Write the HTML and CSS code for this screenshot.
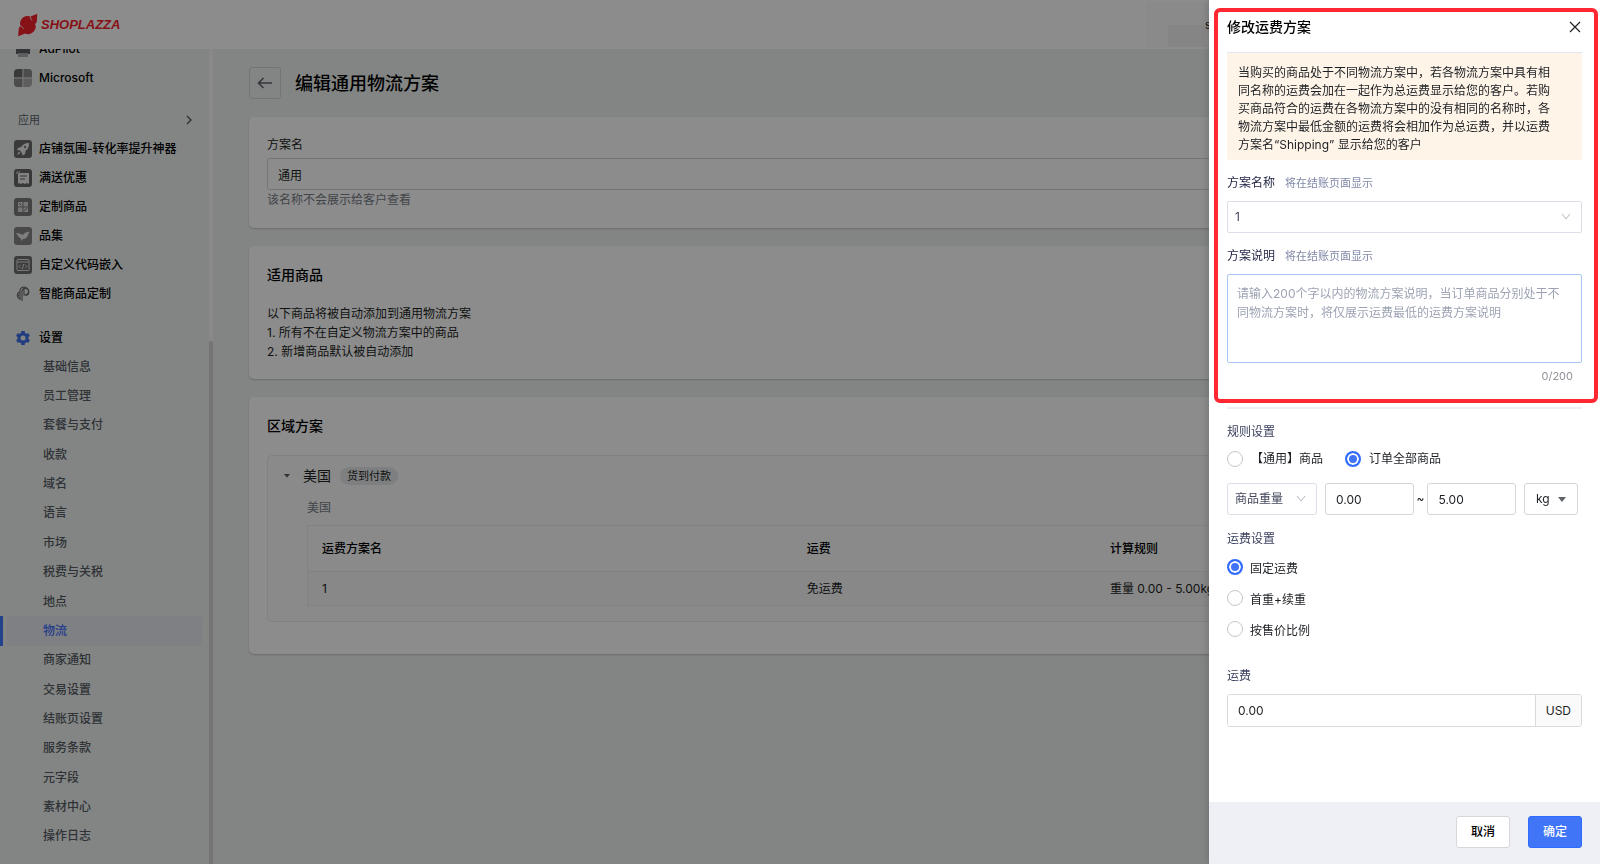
FILE: index.html
```html
<!DOCTYPE html>
<html lang="zh-CN">
<head>
    <meta charset="UTF-8">
    <meta name="viewport" content="width=device-width, initial-scale=1.0">
    <title>编辑通用物流方案</title>
    <link rel="stylesheet" href="styles.css">
</head>
<body>

    <header class="topbar">
        <a class="logo" href="#">
            <svg width="20" height="24" viewBox="0 0 20 24" aria-hidden="true">
                <path fill="#f5222d" d="M19.300 0.800 L18.800 8.600 C18.600 9.800 18 10.500 16.800 10.900 C18.200 12.600 18 14.600 17 16.600 C15.800 19 13.800 20.900 11 21.200 C9.300 21.300 8.200 20.900 7.200 20.600 L0.100 23.200 L0.800 15.700 C1 14.400 1.800 13.700 2.900 13.300 C1.800 11.500 1.700 9.500 2.900 7.300 C4.200 4.800 6.100 3.300 8.600 3 C10.200 2.800 11.500 3.100 12.500 3.500 Z"/>
                <path fill="none" stroke="#fff" stroke-width="0.900" d="M12.300 3.500 C12.600 5.500 13.200 6.500 14 7.500 M2.900 13.300 C4.400 14 5.200 15 5.800 16.200"/>
            </svg>
            <span class="logo-text">SHOPLAZZA</span>
        </a>
        <div class="account"><span class="avatar"></span><span class="account-name">sl</span></div>
    </header>

    <div class="layout">
        <aside class="sidebar">
            <nav class="menu">
                <a class="menu-item" href="#">
                    <svg class="icon" viewBox="0 0 18 18"><path fill="#5c6066" d="M2 8h14v6H2z"/><path fill="#a9acb0" d="M4 13h10v4H4z"/></svg>
                    AdPilot
                </a>
                <a class="menu-item" href="#">
                    <svg class="icon" viewBox="0 0 18 18"><rect width="18" height="18" rx="4" fill="#ababab"/><path fill="#686868" d="M4 0h4.500v8.500H0V4a4 4 0 0 1 4-4z"/><path fill="#8b8b8b" d="M9 0h5a4 4 0 0 1 4 4v4.500H9zM0 9h8.500v9H4a4 4 0 0 1-4-4z"/><path stroke="#ddd" stroke-width="1" d="M9 0v18M0 9h18"/></svg>
                    Microsoft
                </a>

                <a class="menu-group" href="#">应用
                    <svg width="10" height="10" viewBox="0 0 10 10"><path d="M3 1l4 4-4 4" fill="none" stroke="#454b55" stroke-width="1.200"/></svg>
                </a>
                <a class="menu-item" href="#">
                    <svg class="icon" viewBox="0 0 18 18"><rect width="18" height="18" rx="3" fill="#6b6b6b"/><path fill="#eee" d="M15 3c-4 0-6 1.500-8 4L4 8l-1 2 3 .500L8 13l.500 2.500L11 14l.500-3C14 9 15 7 15 3zM5 11.500L3 15l3.500-2z"/><circle cx="11" cy="7" r="1.200" fill="#777"/></svg>
                    店铺氛围-转化率提升神器
                </a>
                <a class="menu-item" href="#">
                    <svg class="icon" viewBox="0 0 18 18"><rect width="18" height="18" rx="3" fill="#666"/><path fill="#eee" d="M4 4h11v11l-2-1-2 1-2-1-2 1-2-1-1 1z"/><path stroke="#666" stroke-width="1.200" d="M6 7h7M6 10h5"/><path stroke="#eee" d="M3 5V3h3"/></svg>
                    满送优惠
                </a>
                <a class="menu-item" href="#">
                    <svg class="icon" viewBox="0 0 18 18"><rect width="18" height="18" rx="3" fill="#7b7b7b"/><path fill="#d8d8d8" d="M4 4h4.500v4.500H4zM9.500 4H14v4.500H9.500zM4 9.500h4.500V14H4zM9.500 9.500H14V14H9.500z"/><path stroke="#7b7b7b" d="M5 5l2.500 2.500M10 13l3-3"/></svg>
                    定制商品
                </a>
                <a class="menu-item" href="#">
                    <svg class="icon" viewBox="0 0 18 18"><rect width="18" height="18" rx="3" fill="#858585"/><path fill="#e6e6e6" d="M2 6c3 0 5 1 7 2 1-2 3-3 5-3l2-.500-1.500 2C14 10 12 12 9 12l-2 2 0-2.500C5 11 4 9 2 6z"/></svg>
                    品集
                </a>
                <a class="menu-item" href="#">
                    <svg class="icon" viewBox="0 0 18 18"><rect width="18" height="18" rx="3" fill="#6d6d6d"/><g fill="none" stroke="#e2e2e2"><rect x="3" y="3.500" width="12" height="11" rx="1"/><path d="M3 6h12M7 8.500L5 10.500l2 2M11 8.500l2 2-2 2M9.800 8l-1.500 5"/></g></svg>
                    自定义代码嵌入
                </a>
                <a class="menu-item" href="#">
                    <svg class="icon" viewBox="0 0 18 18"><g fill="none" stroke="#6d6d6d" stroke-width="1.200"><path d="M8 16V6a3.500 3.500 0 1 1 3.500 4.500M6 15V6C6 0 15 1.500 14.500 6.500 14 10 10 10 10 10V4.500"/><path d="M6 7C2 8 3 14 6 13.500M4.500 9.500v2"/></g></svg>
                    智能商品定制
                </a>

                <a class="menu-item menu-settings" href="#">
                    <svg class="icon" viewBox="0 0 18 18"><g fill="#3f6fe8"><circle cx="9" cy="9" r="5.500"/><path d="M7.200 2h3.600v14H7.200z"/><path d="M7.200 2h3.600v14H7.200z" transform="rotate(60 9 9)"/><path d="M7.200 2h3.600v14H7.200z" transform="rotate(120 9 9)"/></g><circle cx="9" cy="9" r="2.500" fill="#eff3f1"/></svg>
                    设置
                </a>
                <ul class="submenu">
                    <li><a href="#">基础信息</a></li>
                    <li><a href="#">员工管理</a></li>
                    <li><a href="#">套餐与支付</a></li>
                    <li><a href="#">收款</a></li>
                    <li><a href="#">域名</a></li>
                    <li><a href="#">语言</a></li>
                    <li><a href="#">市场</a></li>
                    <li><a href="#">税费与关税</a></li>
                    <li><a href="#">地点</a></li>
                    <li class="active"><a href="#">物流</a></li>
                    <li><a href="#">商家通知</a></li>
                    <li><a href="#">交易设置</a></li>
                    <li><a href="#">结账页设置</a></li>
                    <li><a href="#">服务条款</a></li>
                    <li><a href="#">元字段</a></li>
                    <li><a href="#">素材中心</a></li>
                    <li><a href="#">操作日志</a></li>
                </ul>
            </nav>
            <div class="scroll-track"><div class="scroll-thumb"></div></div>
        </aside>

        <main class="content">
            <div class="page-title">
                <button class="back" type="button" aria-label="返回">
                    <svg width="16" height="12" viewBox="0 0 16 12"><path d="M15 6H2M6.500 1L1.500 6l5 5" fill="none" stroke="#5f6670" stroke-width="1.600"/></svg>
                </button>
                <h1>编辑通用物流方案</h1>
            </div>

            <section class="card">
                <label class="field-label" for="planName">方案名</label>
                <input class="text-input" type="text" id="planName" value="通用">
                <p class="field-help">该名称不会展示给客户查看</p>
            </section>

            <section class="card">
                <h2>适用商品</h2>
                <p class="desc">以下商品将被自动添加到通用物流方案</p>
                <p class="desc">1. 所有不在自定义物流方案中的商品</p>
                <p class="desc">2. 新增商品默认被自动添加</p>
            </section>

            <section class="card card-zones">
                <h2>区域方案</h2>
                <div class="zone">
                    <div class="zone-head">
                        <svg width="6" height="4" viewBox="0 0 6 4"><path d="M0 0h6L3 3.500z" fill="#555b66"/></svg>
                        <span class="zone-name">美国</span>
                        <span class="badge">货到付款</span>
                    </div>
                    <div class="zone-body">
                        <p class="zone-country">美国</p>
                        <table class="rates">
                            <thead>
                                <tr><th class="col-name">运费方案名</th><th class="col-fee">运费</th><th>计算规则</th></tr>
                            </thead>
                            <tbody>
                                <tr><td>1</td><td>免运费</td><td>重量 0.00 - 5.00kg</td></tr>
                            </tbody>
                        </table>
                    </div>
                </div>
            </section>
        </main>
    </div>

    <div class="mask"></div>

    <form class="drawer">
        <div class="drawer-head">
            <h2>修改运费方案</h2>
            <button class="close" type="button" aria-label="关闭">
                <svg width="12" height="12" viewBox="0 0 12 12"><path d="M1 1l10 10M11 1L1 11" stroke="#222" stroke-width="1.200"/></svg>
            </button>
        </div>

        <div class="drawer-body">
            <p class="notice">当购买的商品处于不同物流方案中，若各物流方案中具有相同名称的运费会加在一起作为总运费显示给您的客户。若购买商品符合的运费在各物流方案中的没有相同的名称时，各物流方案中最低金额的运费将会相加作为总运费，并以运费方案名“Shipping” 显示给您的客户</p>

            <div class="form-label">
                <label for="rateName">方案名称</label><span>将在结账页面显示</span>
            </div>
            <div class="select-box">
                <select id="rateName"><option>1</option></select>
                <svg class="chevron" viewBox="0 0 10 8"><path d="M1 1l4 5 4-5" fill="none" stroke="#b4b8c2"/></svg>
            </div>

            <div class="form-label">
                <label for="rateDesc">方案说明</label><span>将在结账页面显示</span>
            </div>
            <textarea id="rateDesc" placeholder="请输入200个字以内的物流方案说明，当订单商品分别处于不同物流方案时，将仅展示运费最低的运费方案说明"></textarea>
            <div class="counter">0/200</div>

            <hr>

            <h3>规则设置</h3>
            <div class="radio-row">
                <label><input type="radio" name="scope">【通用】商品</label>
                <label><input type="radio" name="scope" checked>订单全部商品</label>
            </div>
            <div class="range">
                <div class="select-box">
                    <select aria-label="计算方式"><option>商品重量</option></select>
                    <svg class="chevron" viewBox="0 0 10 8"><path d="M1 1l4 5 4-5" fill="none" stroke="#b4b8c2"/></svg>
                </div>
                <div class="range-values">
                    <input class="text-input" type="text" value="0.00" aria-label="最小值">
                    <span>~</span>
                    <input class="text-input" type="text" value="5.00" aria-label="最大值">
                </div>
                <div class="select-box unit">
                    <select aria-label="单位"><option>kg</option></select>
                    <svg class="caret" viewBox="0 0 8 5"><path d="M0 0h8L4 5z" fill="#5f6368"/></svg>
                </div>
            </div>

            <h3>运费设置</h3>
            <div class="radio-list">
                <label><input type="radio" name="fee" checked>固定运费</label>
                <label><input type="radio" name="fee">首重+续重</label>
                <label><input type="radio" name="fee">按售价比例</label>
            </div>

            <label class="fee-label" for="fee">运费</label>
            <div class="input-group">
                <input type="text" id="fee" value="0.00">
                <span>USD</span>
            </div>
        </div>

        <div class="drawer-foot">
            <button class="btn" type="button">取消</button>
            <button class="btn btn-primary" type="button">确定</button>
        </div>

        <div class="highlight"></div>
    </form>

</body>
</html>
```
FILE: styles.css
```css
* {
    box-sizing: border-box;
}

body {
    margin: 0;
    height: 100vh;
    display: flex;
    flex-direction: column;
    overflow: hidden;
    background: #eff3f1;
    color: #1c1f23;
    font-family: Inter, "Noto Sans CJK SC", sans-serif;
    font-size: 12px;
    line-height: 20px;
}

h1, h2, h3, p, ul {
    margin: 0;
    padding: 0;
    font-weight: 500;
}

p {
    font-weight: 400;
}

a {
    color: inherit;
    text-decoration: none;
}

input, select, textarea, button {
    font: inherit;
    color: inherit;
    margin: 0;
}

svg {
    flex: none;
}

/* top bar */
.topbar {
    height: 49px;
    flex: none;
    display: flex;
    align-items: center;
    padding-left: 18px;
    background: #fff;
    position: relative;
    z-index: 1;
}

.logo {
    display: flex;
    align-items: center;
    gap: 3px;
}

.logo-text {
    color: #f5222d;
    font-family: "Liberation Sans Narrow", "Liberation Sans", sans-serif;
    font-size: 13px;
    font-weight: 700;
    font-style: italic;
}

.account {
    margin-left: auto;
    width: 454px;
    height: 45px;
    display: flex;
    align-items: flex-end;
    padding-left: 22px;
    background: #fcfcfc;
}

.avatar {
    width: 37px;
    height: 22px;
    background: #f3f3f3;
}

.account-name {
    align-self: center;
    font-size: 11px;
}

/* sidebar */
.layout {
    flex: 1;
    display: flex;
    min-height: 0;
}

.sidebar {
    width: 213px;
    flex: none;
    display: flex;
    overflow: hidden;
}

.menu {
    flex: 1;
    display: flex;
    flex-direction: column;
    margin-top: -15px;
    padding-bottom: 13px;
}

.menu-item {
    display: flex;
    align-items: center;
    gap: 7px;
    height: 29px;
    padding-left: 14px;
    font-weight: 500;
    color: #000;
}

.icon {
    width: 18px;
    height: 18px;
}

.menu-group {
    display: flex;
    align-items: center;
    justify-content: space-between;
    height: 29px;
    margin-top: 13px;
    padding: 0 15px 0 18px;
    font-size: 11px;
    color: #5b626c;
}

.menu-settings {
    margin-top: 15px;
}

.submenu {
    flex: 1;
    display: flex;
    flex-direction: column;
    list-style: none;
    color: #565c65;
}

.submenu li {
    flex: 1;
    display: flex;
    border-left: 3px solid transparent;
    padding: 0 7px 0 4px;
}

.submenu a {
    flex: 1;
    display: flex;
    align-items: center;
    padding-left: 36px;
    border-radius: 2px;
}

.submenu .active {
    border-left-color: #3f78ff;
    color: #3f6fff;
}

.submenu .active a {
    background: #e7e9ee;
}

.scroll-track {
    width: 4px;
    padding-top: 292px;
    background: #fafafa;
}

.scroll-thumb {
    height: 100%;
    border-radius: 2px 2px 0 0;
    background: #d3d1d6;
}

/* page */
.content {
    flex: 1;
    display: flex;
    flex-direction: column;
    gap: 18px;
    padding: 18px 36px;
}

.page-title {
    display: flex;
    align-items: center;
    gap: 14px;
}

.page-title h1 {
    padding-top: 2px;
    font-size: 18px;
    color: #000;
}

.back {
    width: 32px;
    height: 32px;
    display: flex;
    align-items: center;
    justify-content: center;
    padding: 0;
    background: none;
    border: 1px solid #cfd3d6;
    border-radius: 3px;
}

.card {
    padding: 18px;
    background: #fff;
    border-radius: 5px;
    box-shadow: 0 1px 2px rgba(0, 0, 0, 0.2);
}

.card h2 {
    margin-bottom: 18px;
    font-size: 14px;
    line-height: 22px;
    color: #000;
}

.field-label {
    display: block;
    margin-bottom: 3px;
}

.text-input {
    display: block;
    width: 100%;
    height: 32px;
    padding: 0 10px;
    background: #fff;
    border: 1px solid #d3d6da;
    border-radius: 3px;
}

.field-help, .zone-country {
    color: #777d86;
}

.desc {
    line-height: 19px;
}

.card-zones {
    padding-bottom: 32px;
}

.zone {
    padding: 10px 24px 15px 16px;
    background: #f9fbfa;
    border: 1px solid #e8eaec;
    border-radius: 5px;
}

.zone-head {
    display: flex;
    align-items: center;
}

.zone-name {
    margin: 0 9px 0 13px;
    font-size: 14px;
}

.badge {
    padding: 0 7px;
    border-radius: 9px;
    background: #e6e7ea;
    font-size: 11px;
    line-height: 18px;
}

.zone-body {
    margin: 12px 0 0 23px;
}

.rates {
    width: 100%;
    margin-top: 7px;
    table-layout: fixed;
    border: 1px solid #eceeef;
    border-collapse: collapse;
    text-align: left;
}

.rates th {
    height: 46px;
    padding: 0 14px;
    font-weight: 500;
    color: #000;
}

.rates td {
    height: 34px;
    padding: 0 14px;
    background: #f7f7f8;
    border-top: 1px solid #eceeef;
}

.col-name {
    width: 40%;
}

.col-fee {
    width: 25%;
}

.mask {
    position: fixed;
    inset: 0;
    z-index: 2;
    background: rgba(0, 0, 0, 0.45);
}

/* drawer */
.drawer {
    position: fixed;
    top: 0;
    right: 0;
    bottom: 0;
    z-index: 3;
    width: 391px;
    display: flex;
    flex-direction: column;
    background: #fff;
    box-shadow: -2px 0 8px rgba(0, 0, 0, 0.15);
}

.drawer-head {
    display: flex;
    align-items: center;
    justify-content: space-between;
    height: 53px;
    margin: 0 18px;
    padding-top: 2px;
    border-bottom: 1px solid #e3e5f3;
}

.drawer-head h2 {
    font-size: 14px;
    color: #000;
}

.close {
    display: flex;
    padding: 1px;
    background: none;
    border: 0;
}

.drawer-body {
    flex: 1;
    padding: 0 18px;
}

.notice {
    padding: 11px 24px 6px 11px;
    background: #fff4e8;
    border-radius: 0 0 3px 3px;
    line-height: 18px;
}

.form-label {
    display: flex;
    align-items: center;
    gap: 10px;
    margin: 13px 0 8px;
    color: #242847;
}

.form-label span {
    font-size: 11px;
    color: #8088a6;
}

.select-box {
    position: relative;
}

.select-box select {
    display: block;
    width: 100%;
    height: 32px;
    padding: 0 7px;
    appearance: none;
    background: #fff;
    border: 1px solid #dcdfe8;
    border-radius: 2px;
    color: #42465c;
}

.chevron {
    position: absolute;
    top: 12px;
    right: 11px;
    width: 10px;
    height: 8px;
    pointer-events: none;
}

textarea {
    display: block;
    width: 100%;
    height: 89px;
    padding: 9px 16px 9px 9px;
    border: 1px solid #a9c6f7;
    border-radius: 2px;
    line-height: 19px;
    resize: none;
}

textarea::placeholder {
    color: #9da3b4;
}

.counter {
    margin-top: 3px;
    padding-right: 9px;
    text-align: right;
    font-size: 11px;
    color: #8f9298;
}

hr {
    height: 2px;
    margin: 21px 0 13px;
    border: 0;
    background: #eeeff3;
}

.drawer h3, .fee-label {
    display: block;
    font-size: 12px;
    font-weight: 400;
    color: #3a3f5c;
}

input[type="radio"] {
    appearance: none;
    width: 16px;
    height: 16px;
    border: 1px solid #c4c6cb;
    border-radius: 50%;
    background: #fff;
}

input[type="radio"]:checked {
    border: 2px solid #2f6bff;
    background: #3f74f6;
    box-shadow: inset 0 0 0 2px #fff;
}

.radio-row {
    display: flex;
    gap: 22px;
    margin: 7px 0 14px;
}

.radio-row label {
    display: flex;
    align-items: center;
    gap: 8px;
}

.range {
    display: flex;
    gap: 8px;
    margin: 0 4px 14px 0;
}

.range > .select-box {
    width: 90px;
    flex: none;
}

.range > .unit {
    width: 54px;
}

.range select {
    border-radius: 3px;
}

.range-values {
    flex: 1;
    display: flex;
    align-items: center;
    gap: 3px;
}

.range-values .text-input {
    flex: 1;
    min-width: 0;
}

.range .unit select {
    padding-left: 11px;
    border-color: #d3d6da;
    color: #1c1f23;
}

.caret {
    position: absolute;
    top: 14px;
    right: 12px;
    width: 8px;
    height: 5px;
    pointer-events: none;
}

.radio-list {
    display: flex;
    flex-direction: column;
    gap: 11px;
    margin: 10px 0 25px;
}

.radio-list label {
    display: flex;
    gap: 7px;
}

.fee-label {
    margin-bottom: 8px;
}

.input-group {
    display: flex;
    height: 33px;
    border: 1px solid #d8dadd;
    border-radius: 3px;
    overflow: hidden;
}

.input-group input {
    flex: 1;
    min-width: 0;
    padding: 0 10px;
    border: 0;
}

.input-group span {
    display: flex;
    align-items: center;
    padding: 0 10px;
    background: #fafafa;
    border-left: 1px solid #d8dadd;
}

.drawer-foot {
    display: flex;
    align-items: center;
    justify-content: flex-end;
    gap: 18px;
    height: 62px;
    padding: 0 18px 2px;
    background: #eef0f5;
}

.btn {
    height: 32px;
    padding: 0 14px;
    background: #fff;
    border: 1px solid #d5d7dd;
    border-radius: 3px;
    font-weight: 500;
    color: #000;
}

.btn-primary {
    background: #4175f7;
    border-color: #2f6bff;
    color: #fff;
}

/* red frame round the upper part of the drawer */
.highlight {
    position: absolute;
    top: 8px;
    left: 5px;
    right: 2px;
    height: 395px;
    border: 4px solid #ff2832;
    border-radius: 6px;
    pointer-events: none;
}
```
